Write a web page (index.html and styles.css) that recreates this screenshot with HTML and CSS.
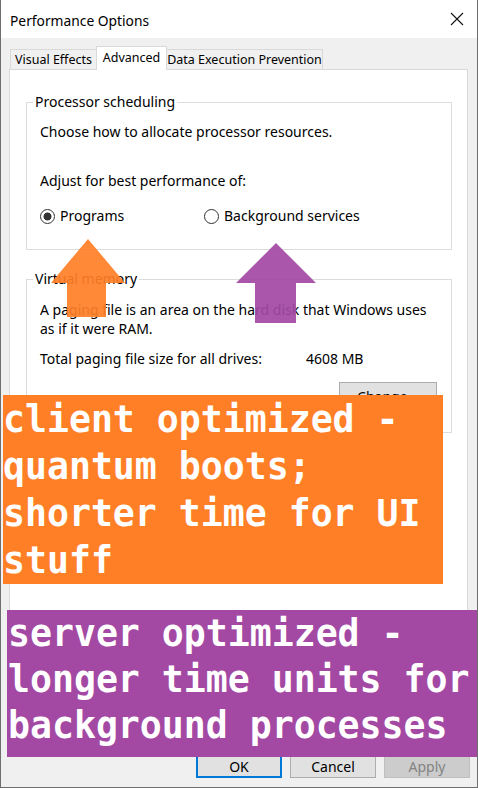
FILE: index.html
```html
<!DOCTYPE html>
<html lang="en">
<head>
<meta charset="utf-8">
<title>Performance Options</title>
<link rel="stylesheet" href="styles.css">
</head>
<body>
<div class="window">
  <div class="titlebar">
    <span class="title">Performance Options</span>
    <svg class="close" width="14" height="14" viewBox="0 0 14 14"><path d="M1 1 L13 13 M13 1 L1 13" stroke="#111" stroke-width="1.1" fill="none"/></svg>
  </div>
  <div class="body">
    <div class="tabs">
      <div class="tab t1">Visual Effects</div>
      <div class="tab active">Advanced</div>
      <div class="tab t3">Data Execution Prevention</div>
    </div>
    <div class="panel">
      <fieldset class="group sched">
        <legend>Processor scheduling</legend>
        <p class="choose">Choose how to allocate processor resources.</p>
        <p class="adjust">Adjust for best performance of:</p>
        <div class="radios">
          <div class="opt"><span class="radio checked"></span><span>Programs</span></div>
          <div class="opt"><span class="radio"></span><span>Background services</span></div>
        </div>
      </fieldset>
      <fieldset class="group vm">
        <legend>Virtual memory</legend>
        <p class="desc">A paging file is an area on the hard disk that Windows uses<br>as if it were RAM.</p>
        <div class="total"><span>Total paging file size for all drives:</span><span>4608 MB</span></div>
        <div class="change-row"><div class="btn change">Change...</div></div>
      </fieldset>
    </div>
    <div class="buttons">
      <div class="btn ok">OK</div>
      <div class="btn">Cancel</div>
      <div class="btn disabled">Apply</div>
    </div>
  </div>

  <svg class="arrow arrow-orange" width="75" height="79" viewBox="0 0 75 79"><polygon points="37,0 74,44 55,44 55,78 16,78 16,44 0,44" fill="#ff7f27"/></svg>
  <svg class="arrow arrow-purple" width="81" height="80" viewBox="0 0 81 80"><polygon points="40,0 80,40 60,40 60,80 19,80 19,40 0,40" fill="#a349a4"/></svg>

  <div class="note note-orange">client optimized -<br>quantum boots;<br>shorter time for UI<br>stuff</div>
  <div class="note note-purple">server optimized -<br>longer time units for<br>background processes</div>
</div>
</body>
</html>
```

FILE: styles.css
```css
html, body {
  margin: 0;
  padding: 0;
  background: #fff;
}

.window {
  position: relative;
  width: 478px;
  height: 788px;
  box-sizing: border-box;
  border: 1px solid #6e6e6e;
  border-top: none;
  background: #f0f0f0;
  font-family: "Noto Sans", "Open Sans", sans-serif;
  font-size: 14px;
  color: #000;
  overflow: hidden;
}

.titlebar {
  height: 38px;
  background: #fff;
  display: flex;
  justify-content: space-between;
  align-items: flex-start;
  padding: 0 13px 0 9px;
  box-sizing: border-box;
}

.title {
  margin-top: 10px;
  font-size: 13.8px;
  line-height: 20px;
  padding-top: 1px;
}

.close {
  margin-top: 12px;
}

.body {
  padding: 8px 9px 0 8px;
}

.tabs {
  display: flex;
  align-items: flex-end;
  height: 23px;
  padding-left: 1px;
}

.tab {
  box-sizing: border-box;
  height: 20px;
  border: 1px solid #d9d9d9;
  border-bottom: none;
  background: #f0f0f0;
  font-size: 12.5px;
  line-height: 17px;
  padding-top: 1px;
  text-align: center;
  white-space: nowrap;
}

.t1 {
  width: 86px;
  border-right: none;
}

.tab.active {
  position: relative;
  z-index: 1;
  width: 71px;
  height: 24px;
  margin-bottom: -1px;
  padding-top: 2px;
  background: #fff;
}

.t3 {
  width: 156px;
  border-left: none;
}

.panel {
  box-sizing: border-box;
  height: 677px;
  background: #fff;
  border: 1px solid #d9d9d9;
  padding-top: 22px;
}

.group {
  margin: 0 15px 0 16px;
  border: 1px solid #dcdcdc;
  padding: 0 13px;
  min-width: 0;
}

.group legend {
  padding: 0 2px;
  margin-left: -7px;
  line-height: 20px;
}

.group p {
  margin: 0;
}

.sched {
  padding-bottom: 23px;
}

.group .choose {
  margin-top: 10px;
  line-height: 20px;
}

.group .adjust {
  margin-top: 29px;
  line-height: 20px;
}

.radios {
  margin-top: 15px;
  display: grid;
  grid-template-columns: 164px auto;
  line-height: 20px;
}

.opt {
  display: flex;
  align-items: center;
  gap: 5px;
}

.radio {
  width: 15px;
  height: 15px;
  box-sizing: border-box;
  border: 1px solid #333;
  border-radius: 50%;
  background: #fff;
}

.radio.checked {
  background: radial-gradient(circle, #333 0 3.7px, #fff 4.3px);
}

.vm {
  margin-top: 19px;
  padding-bottom: 21px;
}

.group .desc {
  margin-top: 11px;
  line-height: 19px;
}

.total {
  margin-top: 11px;
  display: grid;
  grid-template-columns: 266px auto;
  line-height: 20px;
}

.change-row {
  margin-top: 13px;
  display: flex;
  justify-content: flex-end;
  padding-right: 1px;
}

.btn {
  box-sizing: border-box;
  width: 86px;
  height: 23px;
  border: 1px solid #adadad;
  background: #e1e1e1;
  text-align: center;
  line-height: 21px;
}

.btn.change {
  width: 98px;
  height: 29px;
  line-height: 27px;
}

.btn.ok {
  border: 2px solid #0078d7;
  line-height: 19px;
}

.btn.disabled {
  background: #cccccc;
  border-color: #bfbfbf;
  color: #838383;
}

.buttons {
  margin-top: 9px;
  margin-right: -2px;
  display: flex;
  justify-content: flex-end;
  gap: 8px;
}

.arrow {
  position: absolute;
  opacity: 0.92;
}

.arrow-orange {
  left: 50px;
  top: 239px;
}

.arrow-purple {
  left: 235px;
  top: 243px;
}

.note {
  position: absolute;
  box-sizing: border-box;
  color: #fff;
  font-family: "DejaVu Sans Mono", "Liberation Mono", monospace;
  font-weight: bold;
  font-size: 36.5px;
  white-space: nowrap;
}

.note-orange {
  left: 2px;
  top: 395px;
  width: 440px;
  height: 189px;
  background: #ff7f27;
  line-height: 47px;
  padding-top: 1px;
}

.note-purple {
  left: 6px;
  top: 610px;
  width: 472px;
  height: 147px;
  background: #a349a4;
  line-height: 46px;
  padding: 1px 0 0 1px;
}
```
